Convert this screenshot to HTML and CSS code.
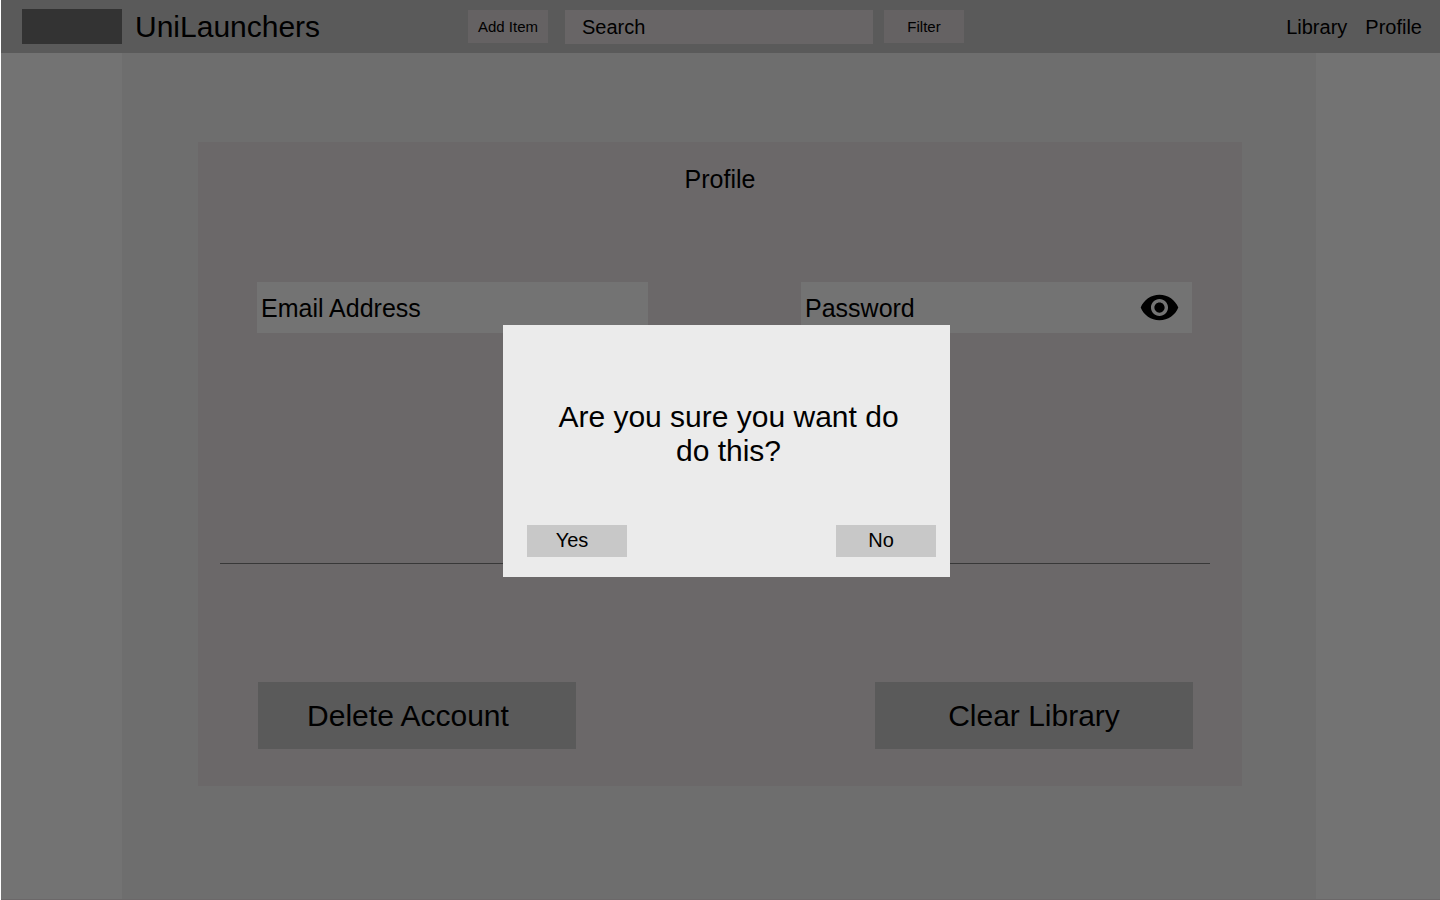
FILE: index.html
```html
<!DOCTYPE html>
<html lang="en">
<head>
<meta charset="utf-8">
<meta name="viewport" content="width=device-width, initial-scale=1">
<title>UniLaunchers - Profile</title>
<link rel="stylesheet" href="styles.css">
</head>
<body>
<header class="topbar">
  <div class="brand">
    <span class="brand-mark"></span>
    <span class="brand-name">UniLaunchers</span>
  </div>
  <form class="tools">
    <button class="tool-button" type="button">Add Item</button>
    <input class="search" type="search" placeholder="Search" aria-label="Search">
    <button class="tool-button" type="button">Filter</button>
  </form>
  <nav class="nav">
    <a href="#library">Library</a>
    <a href="#profile">Profile</a>
  </nav>
</header>
<main class="page">
  <div class="column">
    <section class="card">
      <h1 class="card-title">Profile</h1>
      <div class="fields">
        <div class="field">
          <input class="field-input" type="email" placeholder="Email Address" aria-label="Email Address">
        </div>
        <div class="field">
          <input class="field-input" type="password" placeholder="Password" aria-label="Password">
          <button class="reveal" type="button" aria-label="Show password">
            <svg class="reveal-icon" viewBox="0 0 24 24" aria-hidden="true"><path d="M12 4.5C7 4.5 2.73 7.61 1 12c1.73 4.39 6 7.5 11 7.5s9.27-3.11 11-7.5c-1.73-4.39-6-7.5-11-7.5zM12 17c-2.76 0-5-2.24-5-5s2.24-5 5-5 5 2.240 5 5-2.240 5-5 5zm0-8c-1.660 0-3 1.340-3 3s1.340 3 3 3 3-1.340 3-3-1.340-3-3-3z"/></svg>
          </button>
        </div>
      </div>
      <hr class="divider">
      <div class="actions">
        <button class="action action-delete" type="button">Delete Account</button>
        <button class="action" type="button">Clear Library</button>
      </div>
    </section>
  </div>
</main>
<div class="overlay">
  <div class="modal" role="dialog" aria-modal="true" aria-labelledby="modal-text">
    <p class="modal-text" id="modal-text">Are you sure you want do do this?</p>
    <div class="modal-actions">
      <button class="modal-button" type="button">Yes</button>
      <button class="modal-button" type="button">No</button>
    </div>
  </div>
</div>
</body>
</html>
```
FILE: styles.css
```css
* {
  box-sizing: border-box;
}

body {
  margin: 0;
  min-height: 100vh;
  display: flex;
  flex-direction: column;
  border-left: 1px solid #fff;
  background: #737373;
  color: #000;
  font-family: "Liberation Sans", Arial, sans-serif;
}

button,
input {
  margin: 0;
  border: 0;
  border-radius: 0;
  color: inherit;
  font-family: inherit;
}

input::placeholder {
  color: #000;
  opacity: 1;
}

.topbar {
  display: grid;
  grid-template-columns: 1fr auto 1fr;
  align-items: center;
  padding: 9px 9px 9px 0;
  background: #5a5a5a;
}

.brand {
  display: flex;
  align-items: center;
  gap: 13px;
  padding-left: 21px;
}

.brand-mark {
  width: 100px;
  height: 35px;
  background: #333;
}

.brand-name {
  font-size: 30px;
  line-height: 34px;
}

.tools {
  display: flex;
  align-items: center;
}

.tool-button {
  width: 80px;
  height: 33px;
  padding: 0;
  background: #656263;
  font-size: 15px;
}

.search {
  width: 308px;
  height: 34px;
  margin: 0 11px 0 17px;
  padding: 2px 17px 0;
  appearance: none;
  background: #686566;
  font-size: 20px;
}

.nav {
  display: flex;
  justify-content: flex-end;
  gap: 18px;
  padding: 1px 9px 0 0;
  font-size: 20px;
}

.nav a {
  color: inherit;
  text-decoration: none;
}

.page {
  flex: 1;
  display: flex;
  padding: 0 124px 0 121px;
  border-bottom: 1px solid #6b6869;
}

.column {
  flex: 1;
  padding: 89px 74px 0 76px;
  background: #6e6e6e;
}

.card {
  padding: 22px 0 37px;
  background: #6b6869;
}

.card-title {
  margin: 0;
  font-size: 25px;
  font-weight: 400;
  line-height: 30px;
  text-align: center;
}

.fields,
.actions {
  display: flex;
  justify-content: space-between;
  padding: 0 49px 0 60px;
}

.fields {
  margin-top: 88px;
  padding: 0 50px 0 59px;
}

.field {
  position: relative;
  width: 391px;
}

.field-input {
  display: block;
  width: 100%;
  height: 51px;
  padding: 2px 4px 0;
  background: #737373;
  font-size: 25px;
}

.reveal {
  position: absolute;
  top: 5px;
  right: 12px;
  padding: 0;
  background: none;
}

.reveal-icon {
  display: block;
  width: 41px;
  height: 41px;
}

.divider {
  height: 1px;
  margin: 230px 32px 118px 22px;
  border: 0;
  background: #383838;
}

.action {
  width: 318px;
  height: 67px;
  padding: 0;
  background: #5a5a5a;
  font-size: 30px;
}

.action-delete {
  padding-right: 18px;
}

.overlay {
  position: fixed;
  inset: 0;
  display: flex;
  align-items: center;
  justify-content: center;
  padding: 2px 0 0 13px;
}

.modal {
  width: 447px;
  padding: 75px 14px 20px 24px;
  background: #ebebeb;
}

.modal-text {
  margin: 0 22px 0 16px;
  font-size: 30px;
  line-height: 34px;
  text-align: center;
}

.modal-actions {
  display: flex;
  justify-content: space-between;
  margin-top: 57px;
}

.modal-button {
  width: 100px;
  height: 32px;
  padding: 0 10px 2px 0;
  background: #c8c8c8;
  font-size: 20px;
}
```
